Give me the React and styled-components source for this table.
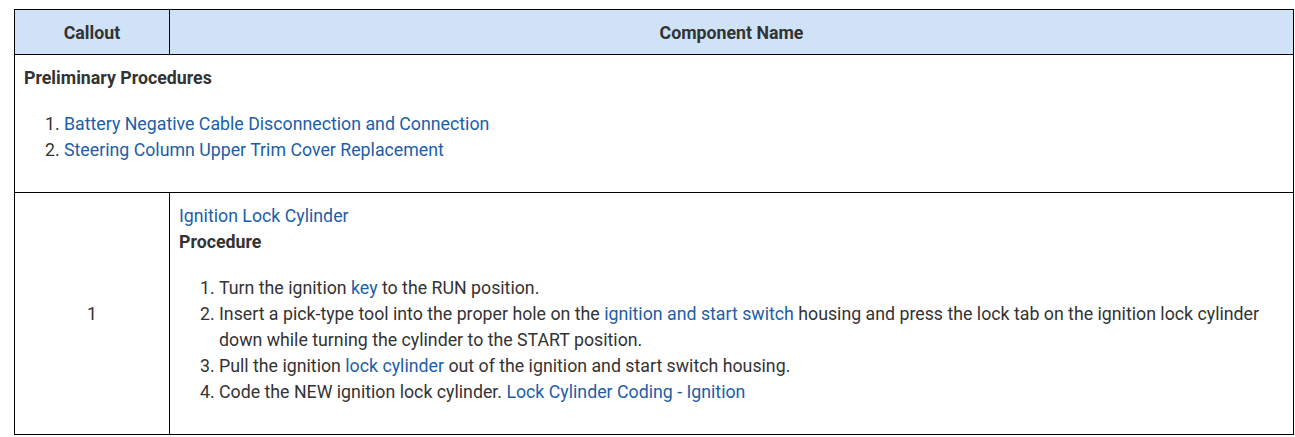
import React from 'react';
import styled, { createGlobalStyle } from 'styled-components';

const Global = createGlobalStyle`
  body {
    margin: 0;
    background: #fff;
    font-family: Roboto, "Liberation Sans", sans-serif;
    font-size: 17.75px;
    line-height: 26px;
    color: #333;
  }
`;

const Page = styled.div`
  padding: 9px 1px 0 14px;
`;

const Table = styled.table`
  width: 1280px;
  border-collapse: collapse;
  table-layout: fixed;
`;

const Head = styled.th`
  box-sizing: border-box;
  background: #cfe2f6;
  border: 1px solid #000;
  padding: 10px 9px 8px;
  font-weight: 700;
  text-align: center;
  line-height: 26px;
  width: ${p => p.width || 'auto'};
`;

const Cell = styled.td`
  border: 1px solid #000;
  padding: 10px 9px 9px;
  vertical-align: ${p => (p.center ? 'middle' : 'top')};
  text-align: ${p => (p.center ? 'center' : 'left')};
`;

const Title = styled.div`
  font-weight: 700;
`;

const Steps = styled.ol`
  margin: 20px 0;
  padding-left: 40px;
`;

const Link = styled.a`
  color: #1c5ea8;
  text-decoration: none;
`;

export default function App() {
  return (
    <Page>
      <Global />
      <Table>
        <thead>
          <tr>
            <Head width="155px">Callout</Head>
            <Head>Component Name</Head>
          </tr>
        </thead>
        <tbody>
          <tr>
            <Cell colSpan={2}>
              <Title>Preliminary Procedures</Title>
              <Steps>
                <li><Link href="#">Battery Negative Cable Disconnection and Connection</Link></li>
                <li><Link href="#">Steering Column Upper Trim Cover Replacement</Link></li>
              </Steps>
            </Cell>
          </tr>
          <tr>
            <Cell center>1</Cell>
            <Cell>
              <Link href="#">Ignition Lock Cylinder</Link>
              <Title>Procedure</Title>
              <Steps>
                <li>Turn the ignition <Link href="#">key</Link> to the RUN position.</li>
                <li>
                  Insert a pick-type tool into the proper hole on the{' '}
                  <Link href="#">ignition and start switch</Link> housing and press the lock tab on the
                  ignition lock cylinder down while turning the cylinder to the START position.
                </li>
                <li>Pull the ignition <Link href="#">lock cylinder</Link> out of the ignition and start switch housing.</li>
                <li>Code the NEW ignition lock cylinder. <Link href="#">Lock Cylinder Coding - Ignition</Link></li>
              </Steps>
            </Cell>
          </tr>
        </tbody>
      </Table>
    </Page>
  );
}
